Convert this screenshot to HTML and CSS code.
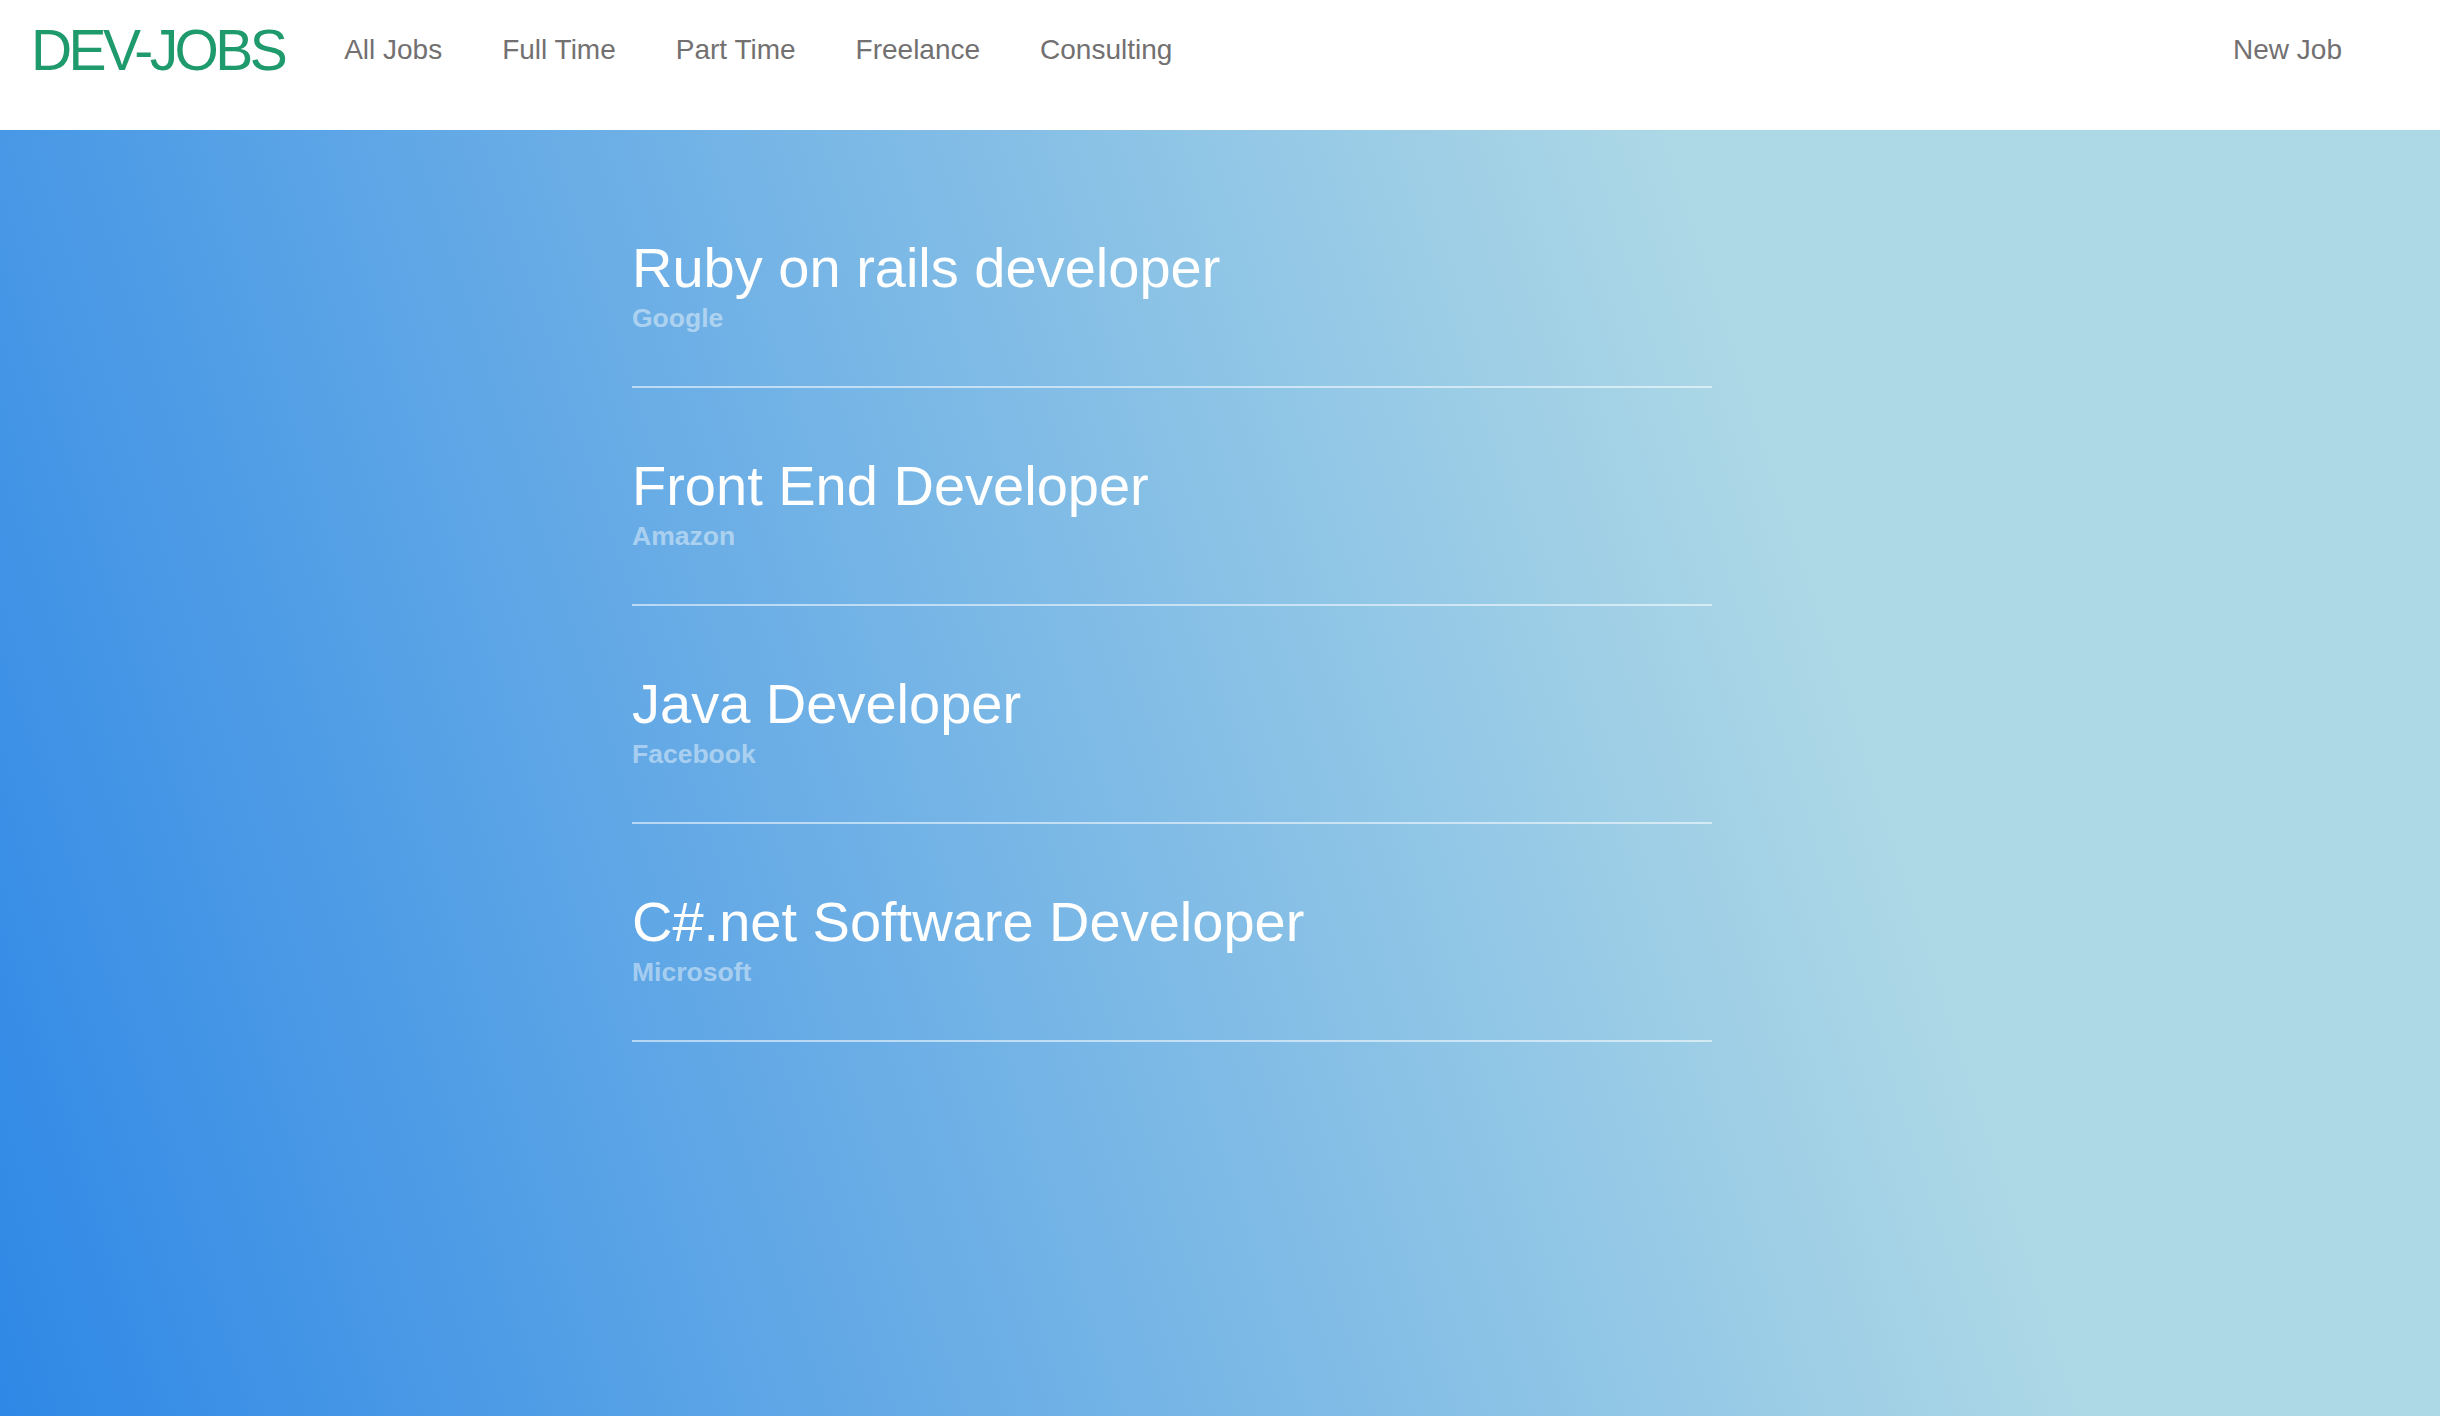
FILE: index.html
```html
<!DOCTYPE html>
<html lang="en">
<head>
<meta charset="utf-8">
<title>DEV-JOBS</title>
<link rel="stylesheet" href="styles.css">
</head>
<body>
<header class="topbar">
  <a class="logo" href="#">DEV-JOBS</a>
  <nav class="nav">
    <a href="#">All Jobs</a>
    <a href="#">Full Time</a>
    <a href="#">Part Time</a>
    <a href="#">Freelance</a>
    <a href="#">Consulting</a>
  </nav>
  <nav class="nav nav-right">
    <a href="#">New Job</a>
  </nav>
</header>
<main class="main">
  <ul class="jobs">
    <li class="job">
      <h2 class="job-title">Ruby on rails developer</h2>
      <div class="job-company">Google</div>
    </li>
    <li class="job">
      <h2 class="job-title">Front End Developer</h2>
      <div class="job-company">Amazon</div>
    </li>
    <li class="job">
      <h2 class="job-title">Java Developer</h2>
      <div class="job-company">Facebook</div>
    </li>
    <li class="job">
      <h2 class="job-title">C#.net Software Developer</h2>
      <div class="job-company">Microsoft</div>
    </li>
  </ul>
</main>
</body>
</html>
```
FILE: styles.css
```css
* { box-sizing: border-box; }
html, body { margin: 0; padding: 0; height: 100%; }
body {
  font-family: "Liberation Sans", Arial, Helvetica, sans-serif;
  display: flex;
  flex-direction: column;
  min-height: 1416px;
}
a { text-decoration: none; }

.topbar {
  height: 130px;
  flex: 0 0 130px;
  background: #ffffff;
  display: flex;
  align-items: flex-start;
  padding: 21px 98px 0 31px;
}
.logo {
  font-size: 57px;
  line-height: 58px;
  letter-spacing: -3.6px;
  color: #1f9a6d;
}
.nav {
  display: flex;
  gap: 60px;
  margin-top: 15px;
  margin-left: 60px;
}
.nav a {
  font-size: 28px;
  line-height: 28px;
  color: #727070;
}
.nav-right { margin-left: auto; }

.main {
  flex: 1 1 auto;
  background: linear-gradient(72deg, #2f88e6 0%, #add8e6 73%, #add8e6 100%);
  padding-top: 40px;
}
.jobs {
  list-style: none;
  margin: 0 0 0 632px;
  padding: 0;
  width: 1080px;
}
.job {
  padding: 66px 0 52px;
  border-bottom: 2px solid rgba(255, 255, 255, 0.55);
}
.job-title {
  margin: 0;
  font-weight: normal;
  font-size: 56px;
  line-height: 64px;
  color: #ffffff;
}
.job-company {
  margin-top: 2px;
  font-size: 26.5px;
  line-height: 32px;
  font-weight: bold;
  color: rgba(255, 255, 255, 0.45);
}
```
